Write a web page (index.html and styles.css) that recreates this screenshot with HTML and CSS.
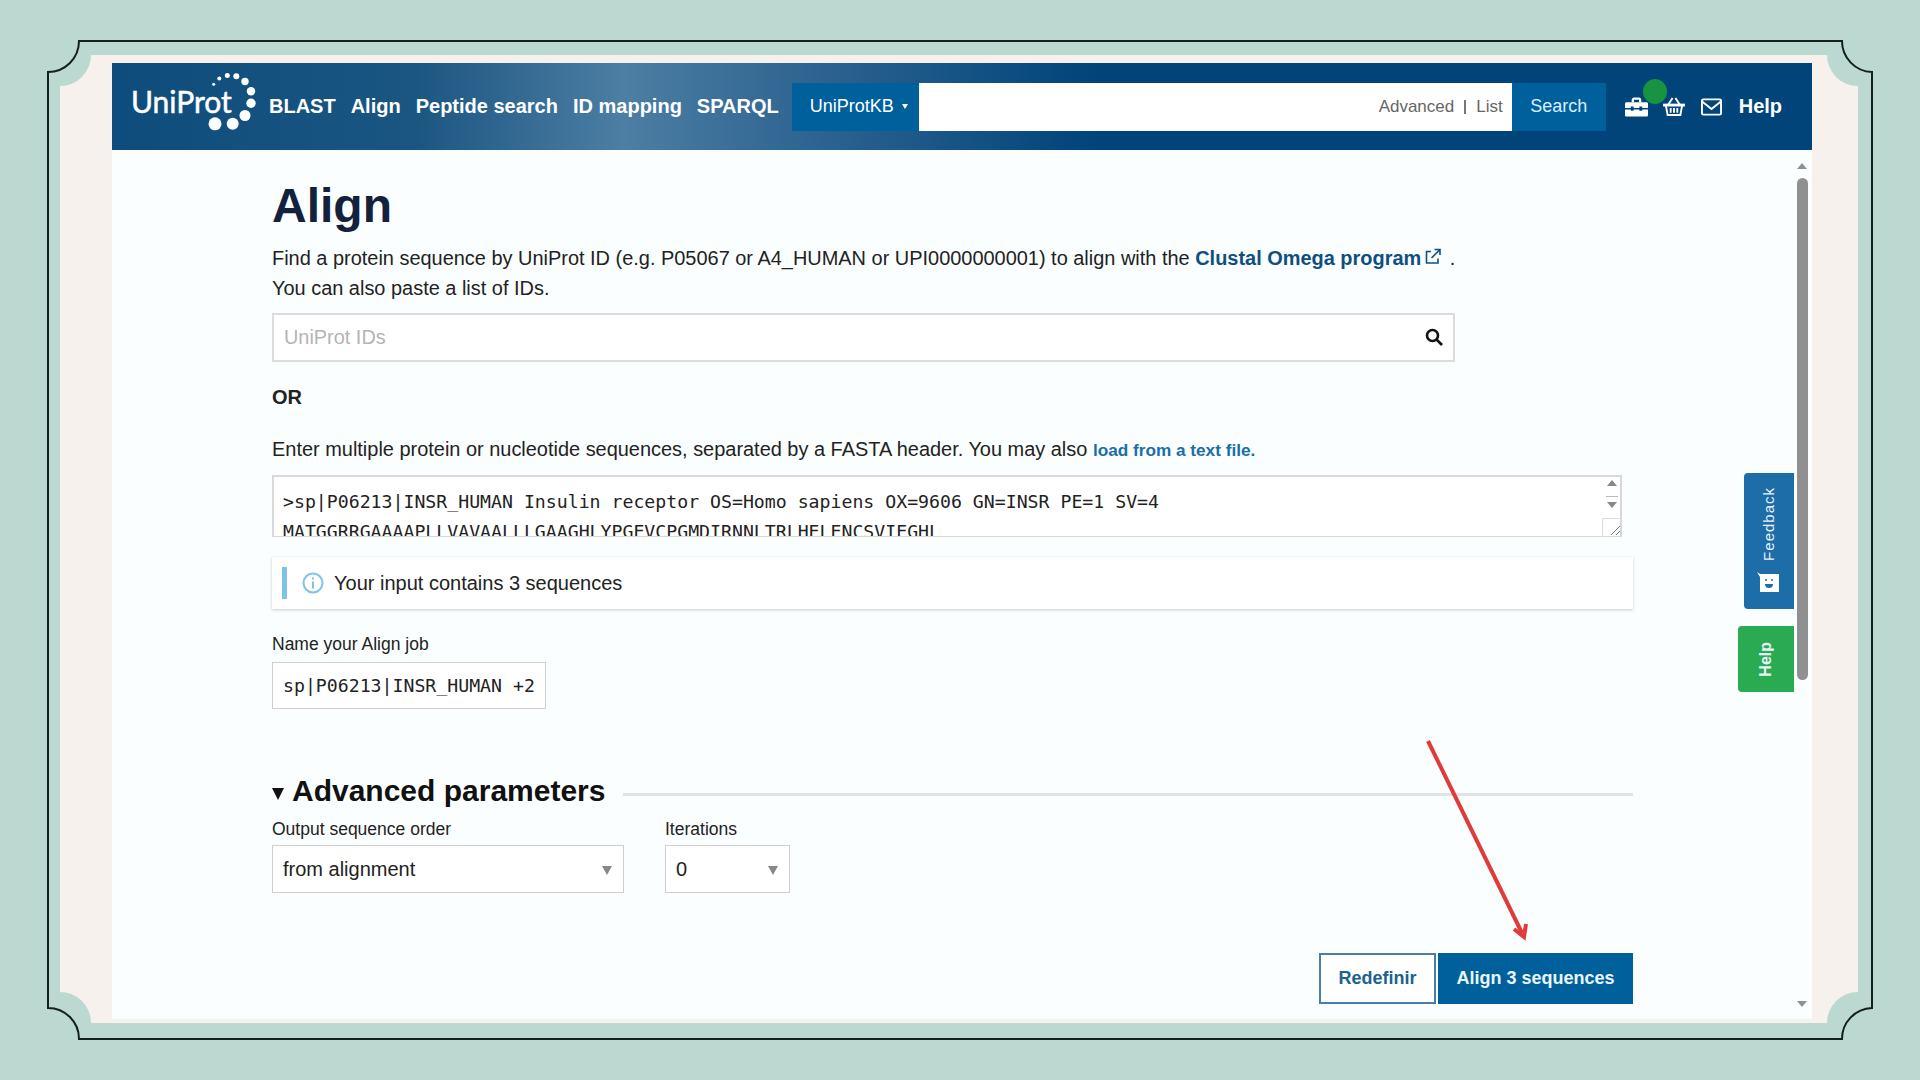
FILE: index.html
```html
<!DOCTYPE html>
<html lang="en">
<head>
    <meta charset="UTF-8">
    <meta name="viewport" content="width=device-width, initial-scale=1.0">
    <title>Align - UniProt</title>
    <link rel="stylesheet" href="styles.css">
</head>
<body>
    <div class="panel">
        <div class="window">
            <header class="topbar">
                <svg class="logo" width="138" height="60" viewBox="0 0 138 60">
                    <text x="0" y="36" class="logo-text">UniProt</text>
                    <circle cx="82.700" cy="7.200" r="1.500"/>
                    <circle cx="88.300" cy="1.500" r="2"/>
                    <circle cx="96.300" cy="-1.500" r="2.500"/>
                    <circle cx="105.300" cy="-0.800" r="3"/>
                    <circle cx="114" cy="4.500" r="3.700"/>
                    <circle cx="120" cy="14.200" r="4.200"/>
                    <circle cx="120" cy="26.200" r="4.700"/>
                    <circle cx="114" cy="38.500" r="5.500"/>
                    <circle cx="101.700" cy="46.800" r="6"/>
                    <circle cx="84" cy="46.800" r="6.500"/>
                </svg>
                <nav class="nav">
                    <a>BLAST</a>
                    <a>Align</a>
                    <a>Peptide search</a>
                    <a>ID mapping</a>
                    <a>SPARQL</a>
                </nav>
                <div class="search">
                    <div class="db-select">UniProtKB <span class="caret"></span></div>
                    <div class="search-field">
                        <span>Advanced</span>
                        <span class="sep"></span>
                        <span>List</span>
                    </div>
                    <div class="search-btn">Search</div>
                </div>
                <div class="tools">
                    <svg width="23" height="20" viewBox="0 0 24 20" fill="#fff">
                        <path d="M7 5V2.500C7 1.200 8 0 9.500 0h5C16 0 17 1.200 17 2.500V5h-2.400V2.400H9.400V5z"/>
                        <path d="M1.500 5h21c.8 0 1.500.7 1.500 1.500V11h-6V9.500h-3V11H9V9.500H6V11H0V6.500C0 5.700.7 5 1.500 5z"/>
                        <path d="M0 12.500h6V14h3v-1.500h6V14h3v-1.500h6V18.500c0 .8-.7 1.500-1.500 1.500h-21C.7 20 0 19.300 0 18.500z"/>
                    </svg>
                    <svg width="22" height="19" viewBox="0 0 23 20" fill="none" stroke="#fff" stroke-width="2">
                        <path d="M0 8.500h23" stroke-width="3"/>
                        <path d="M3 9l1.800 10h13.400L20 9"/>
                        <path d="M5.500 8L10 1M17.500 8L13 1"/>
                        <path d="M8 11.500v5M11.500 11.500v5M15 11.500v5"/>
                    </svg>
                    <svg class="mail" width="21" height="18" viewBox="0 0 22 18" fill="none" stroke="#fff" stroke-width="2">
                        <rect x="1" y="1" width="20" height="16" rx="1.500"/>
                        <path d="M1.500 3.500L11 11l9.500-7.500"/>
                    </svg>
                    <a class="tools-help">Help</a>
                    <span class="green-dot"></span>
                </div>
            </header>

            <main class="content">
                <div class="form">
                    <h1>Align</h1>
                    <p class="intro">Find a protein sequence by UniProt ID (e.g. P05067 or A4_HUMAN or UPI0000000001) to align with the <a class="strong-link">Clustal Omega program</a><svg class="ext" width="16" height="17" viewBox="0 0 16 16" fill="none" stroke="#0f4f7f" stroke-width="1.600">
                            <path d="M6 3H1.500v11.500H13V10"/>
                            <path d="M6.500 9.500L14.500 1.500M9.500 1h5.500v5.500"/>
                        </svg> .<br>You can also paste a list of IDs.</p>

                    <div class="id-search">
                        <input type="text" placeholder="UniProt IDs">
                        <svg width="18" height="18" viewBox="0 0 18 18" fill="none" stroke="#111" stroke-width="2.600">
                            <circle cx="7.500" cy="7.500" r="5.500"/>
                            <path d="M11.500 11.500L17 17"/>
                        </svg>
                    </div>

                    <p class="or">OR</p>
                    <p class="enter">Enter multiple protein or nucleotide sequences, separated by a FASTA header. You may also <a class="small-link">load from a text file.</a></p>

                    <div class="seq-box">
                        <textarea readonly>&gt;sp|P06213|INSR_HUMAN Insulin receptor OS=Homo sapiens OX=9606 GN=INSR PE=1 SV=4
MATGGRRGAAAAPLLVAVAALLLGAAGHLYPGEVCPGMDIRNNLTRLHELENCSVIEGHL</textarea>
                        <span class="spin-up"></span>
                        <span class="spin-line"></span>
                        <span class="spin-down"></span>
                        <svg class="grip" width="20" height="19" viewBox="0 0 20 19" fill="none">
                            <path d="M.5 19V.5H20" stroke="#ddd"/>
                            <path d="M9 17L18 8M14 17l4-4" stroke="#777"/>
                        </svg>
                    </div>

                    <div class="info">
                        <span class="info-bar"></span>
                        <svg width="22" height="22" viewBox="0 0 22 22" fill="none" stroke="#7cc3e6" stroke-width="2">
                            <circle cx="11" cy="11" r="9.500"/>
                            <path d="M11 9.500v7M11 5.500v2"/>
                        </svg>
                        <span>Your input contains 3 sequences</span>
                    </div>

                    <label class="label">Name your Align job</label>
                    <input class="job-name" type="text" value="sp|P06213|INSR_HUMAN +2">

                    <div class="adv-title">
                        <span class="adv-arrow"></span>
                        <h2>Advanced parameters</h2>
                        <span class="adv-line"></span>
                    </div>

                    <div class="adv-row">
                        <div>
                            <label class="label">Output sequence order</label>
                            <div class="select select-wide">from alignment</div>
                        </div>
                        <div>
                            <label class="label">Iterations</label>
                            <div class="select select-small">0</div>
                        </div>
                    </div>

                    <div class="actions">
                        <button class="btn-reset">Redefinir</button>
                        <button class="btn-submit">Align 3 sequences</button>
                    </div>
                </div>

                <div class="tab tab-feedback">
                    <span>Feedback</span>
                    <svg width="22" height="20" viewBox="0 0 22 20">
                        <path d="M0 0l3 2h19v18H3V5z" fill="#fff"/>
                        <circle cx="9" cy="8" r="1" fill="#1d6da8"/>
                        <circle cx="15" cy="8" r="1" fill="#1d6da8"/>
                        <path d="M8 12h8c0 3-2 4-4 4s-4-1-4-4z" fill="#1d6da8"/>
                    </svg>
                </div>
                <div class="tab tab-help"><span>Help</span></div>

                <div class="scrollbar">
                    <span class="scroll-up"></span>
                    <span class="scroll-thumb"></span>
                    <span class="scroll-down"></span>
                </div>
            </main>
        </div>
    </div>

    <!-- outer frame and the red arrow lie over the page -->
    <svg class="overlay" width="1920" height="1080" viewBox="0 0 1920 1080">
        <g fill="#bcd9d1">
            <circle cx="60" cy="55" r="31"/>
            <circle cx="1858" cy="55" r="31"/>
            <circle cx="60" cy="1023" r="31"/>
            <circle cx="1858" cy="1023" r="31"/>
        </g>
        <path d="M79 41H1842A31 31 0 0 0 1872 72V1008A31 31 0 0 0 1842 1039H79A31 31 0 0 0 48 1008V72A31 31 0 0 0 79 41Z" fill="none" stroke="#14201b" stroke-width="2"/>
        <path d="M1428 741L1522 933" stroke="#e03a3a" stroke-width="4" fill="none"/>
        <path d="M1514 929L1524 937L1526 924" stroke="#e03a3a" stroke-width="4" fill="none"/>
    </svg>
</body>
</html>
```

FILE: styles.css
```css
* {
    box-sizing: border-box;
}
body {
    margin: 0;
    width: 1920px;
    height: 1080px;
    overflow: hidden;
    background: #bcd9d1;
    font-family: "Liberation Sans", Arial, sans-serif;
    color: #222;
}
.panel {
    margin: 55px 62px 0 60px;
    height: 968px;
    padding: 8px 46px 4px 52px;
    background: #f6f1ec;
}
.window {
    height: 956px;
    background: #fbfeff;
    display: flex;
    flex-direction: column;
}
.topbar {
    height: 87px;
    flex: none;
    display: flex;
    align-items: center;
    position: relative;
    padding-left: 19px;
    background: linear-gradient(90deg, #0d4c7c 0%, #1b5682 18%, #4d7ea3 30%, #2b6290 42%, #00447a 58%, #00447a 100%);
}
.logo {
    flex: none;
    overflow: visible;
    fill: #fff;
}
.logo-text {
    font-family: Lato, sans-serif;
    font-size: 30px;
    fill: #fff;
    stroke: #fff;
    stroke-width: 0.500px;
}
.nav {
    display: flex;
    gap: 15px;
    color: #fff;
    font-size: 20px;
    font-weight: bold;
}
.search {
    display: flex;
    height: 48px;
    margin-left: 13px;
    color: #fff;
    font-size: 18px;
}
.db-select {
    width: 127px;
    background: #00609c;
    display: flex;
    align-items: center;
    padding-left: 18px;
    gap: 8px;
}
.caret {
    border: 3.500px solid transparent;
    border-top: 5px solid #fff;
    border-bottom: 0;
}
.search-field {
    width: 593px;
    background: #fff;
    color: #666;
    display: flex;
    align-items: center;
    justify-content: flex-end;
    gap: 10px;
    padding-right: 9px;
    font-size: 17px;
}
.sep {
    width: 2px;
    height: 14px;
    background: #777;
}
.search-btn {
    width: 94px;
    background: #00609c;
    color: #d8f0ff;
    display: flex;
    align-items: center;
    justify-content: center;
}
.tools {
    display: flex;
    align-items: center;
    gap: 15px;
    margin-left: 19px;
    position: relative;
}
.mail {
    margin-left: 1px;
}
.tools-help {
    color: #fff;
    font-size: 20px;
    font-weight: bold;
    margin-left: 2px;
}
.green-dot {
    position: absolute;
    left: 18px;
    top: -16px;
    width: 24px;
    height: 25px;
    border-radius: 50%;
    background: #179442;
}
.content {
    flex: 1;
    position: relative;
    padding-left: 160px;
}
.form {
    width: 1361px;
}
h1 {
    margin: 0;
    padding-top: 27px;
    font-size: 48px;
    line-height: 58px;
    color: #14213d;
}
.intro {
    margin: 8px 0 0;
    font-size: 19.950px;
    line-height: 30px;
}
.strong-link {
    color: #0f4f7f;
    font-weight: bold;
}
.ext {
    margin: 0 3px 0 4px;
}
.id-search {
    width: 1183px;
    height: 49px;
    margin-top: 10px;
    position: relative;
}
.id-search input {
    width: 100%;
    height: 100%;
    padding: 0 10px;
    border: 2px solid #dcdcdc;
    background: #fff;
    font: 19.900px "Liberation Sans", Arial, sans-serif;
}
.id-search input::placeholder {
    color: #b4b4b4;
}
.id-search svg {
    position: absolute;
    right: 12px;
    top: 15px;
}
.or {
    margin: 23px 0 0;
    font-size: 20px;
    line-height: 24px;
    font-weight: bold;
}
.enter {
    margin: 27px 0 0;
    font-size: 19.950px;
    line-height: 26px;
}
.small-link {
    color: #1a6ea6;
    font-size: 17.200px;
    font-weight: bold;
}
.seq-box {
    width: 1350px;
    height: 62px;
    margin-top: 12px;
    position: relative;
}
.seq-box textarea {
    display: block;
    width: 100%;
    height: 100%;
    padding: 10px 9px 0;
    border: 2px solid #d8d8d8;
    border-bottom-width: 1px;
    background: #fff;
    resize: none;
    overflow: hidden;
    white-space: pre;
    font: 18.200px/30px "DejaVu Sans Mono", monospace;
    color: #222;
    outline: none;
}
.spin-up, .spin-down {
    position: absolute;
    right: 5px;
    border: 5px solid transparent;
    border-left-width: 5px;
}
.spin-up {
    top: 5px;
    border-top: 0;
    border-bottom: 6px solid #888;
}
.spin-down {
    top: 27px;
    border-bottom: 0;
    border-top: 6px solid #888;
}
.spin-line {
    position: absolute;
    right: 4px;
    top: 21px;
    width: 12px;
    height: 1px;
    background: #bbb;
}
.grip {
    position: absolute;
    right: 0;
    bottom: 0;
}
.info {
    width: 1361px;
    height: 52px;
    margin-top: 20px;
    padding-left: 10px;
    display: flex;
    align-items: center;
    background: #fff;
    box-shadow: 0 1px 3px rgba(0, 0, 0, 0.2);
    font-size: 20px;
}
.info-bar {
    width: 5px;
    height: 32px;
    background: #7cc3e6;
    margin-right: 15px;
}
.info svg {
    margin-right: 10px;
}
.label {
    display: block;
    font-size: 17.500px;
    line-height: 22px;
}
.form > .label {
    margin-top: 24px;
}
.job-name {
    display: block;
    width: 274px;
    height: 47px;
    margin-top: 7px;
    padding: 0 10px;
    border: 1px solid #cfcfcf;
    background: #fff;
    font: 18.200px "DejaVu Sans Mono", monospace;
    color: #222;
}
.adv-title {
    display: flex;
    align-items: center;
    margin-top: 64px;
    height: 36px;
}
.adv-arrow {
    border: 6.500px solid transparent;
    border-top: 12px solid #111;
    border-bottom: 0;
    margin: 6px 8px 0 0;
}
h2 {
    margin: 0;
    font-size: 30px;
    color: #111;
}
.adv-line {
    flex: 1;
    height: 3px;
    margin: 7px 0 0 18px;
    background: #dde3e7;
}
.adv-row {
    display: flex;
    gap: 41px;
    margin-top: 9px;
}
.adv-row .label {
    margin-bottom: 5px;
}
.select {
    height: 48px;
    border: 1px solid #cfcfcf;
    background: #fff;
    padding-left: 10px;
    font-size: 20px;
    line-height: 46px;
    position: relative;
}
.select::after {
    content: "";
    position: absolute;
    right: 11px;
    top: 20px;
    border: 5.500px solid transparent;
    border-top: 9px solid #888;
    border-bottom: 0;
}
.select-wide {
    width: 352px;
}
.select-small {
    width: 125px;
}
.actions {
    display: flex;
    justify-content: flex-end;
    gap: 2px;
    margin-top: 60px;
}
.actions button {
    height: 51px;
    font: bold 18px "Liberation Sans", Arial, sans-serif;
    cursor: pointer;
}
.btn-reset {
    width: 117px;
    background: #fff;
    border: 2px solid #4a7fa5;
    color: #1a628f;
}
.btn-submit {
    width: 195px;
    background: #00609c;
    border: none;
    color: #eaf6fd;
}
.tab {
    position: absolute;
    right: 18px;
    color: #e6f3fb;
    display: flex;
    flex-direction: column;
    align-items: center;
    justify-content: center;
    border-radius: 4px 0 0 4px;
}
.tab span {
    writing-mode: vertical-rl;
    transform: rotate(180deg);
}
.tab-feedback {
    top: 323px;
    width: 50px;
    height: 136px;
    justify-content: flex-start;
    padding: 14px 2px 0 0;
    gap: 11px;
    background: #1d6da8;
    font-size: 15px;
    letter-spacing: 1px;
}
.tab-help {
    top: 476px;
    width: 56px;
    height: 66px;
    background: #2bab51;
    font-size: 16px;
    font-weight: bold;
}
.scrollbar {
    position: absolute;
    right: 4px;
    top: 13px;
    width: 11px;
    height: 844px;
}
.scroll-thumb {
    position: absolute;
    left: 0;
    top: 15px;
    width: 11px;
    height: 502px;
    border-radius: 6px;
    background: #909090;
}
.scroll-up, .scroll-down {
    position: absolute;
    left: 0;
    border: 5.500px solid transparent;
}
.scroll-up {
    top: 0;
    border-top: 0;
    border-bottom: 6px solid #909090;
}
.scroll-down {
    bottom: 0;
    border-bottom: 0;
    border-top: 6px solid #909090;
}
.overlay {
    position: absolute;
    left: 0;
    top: 0;
    pointer-events: none;
}
```
